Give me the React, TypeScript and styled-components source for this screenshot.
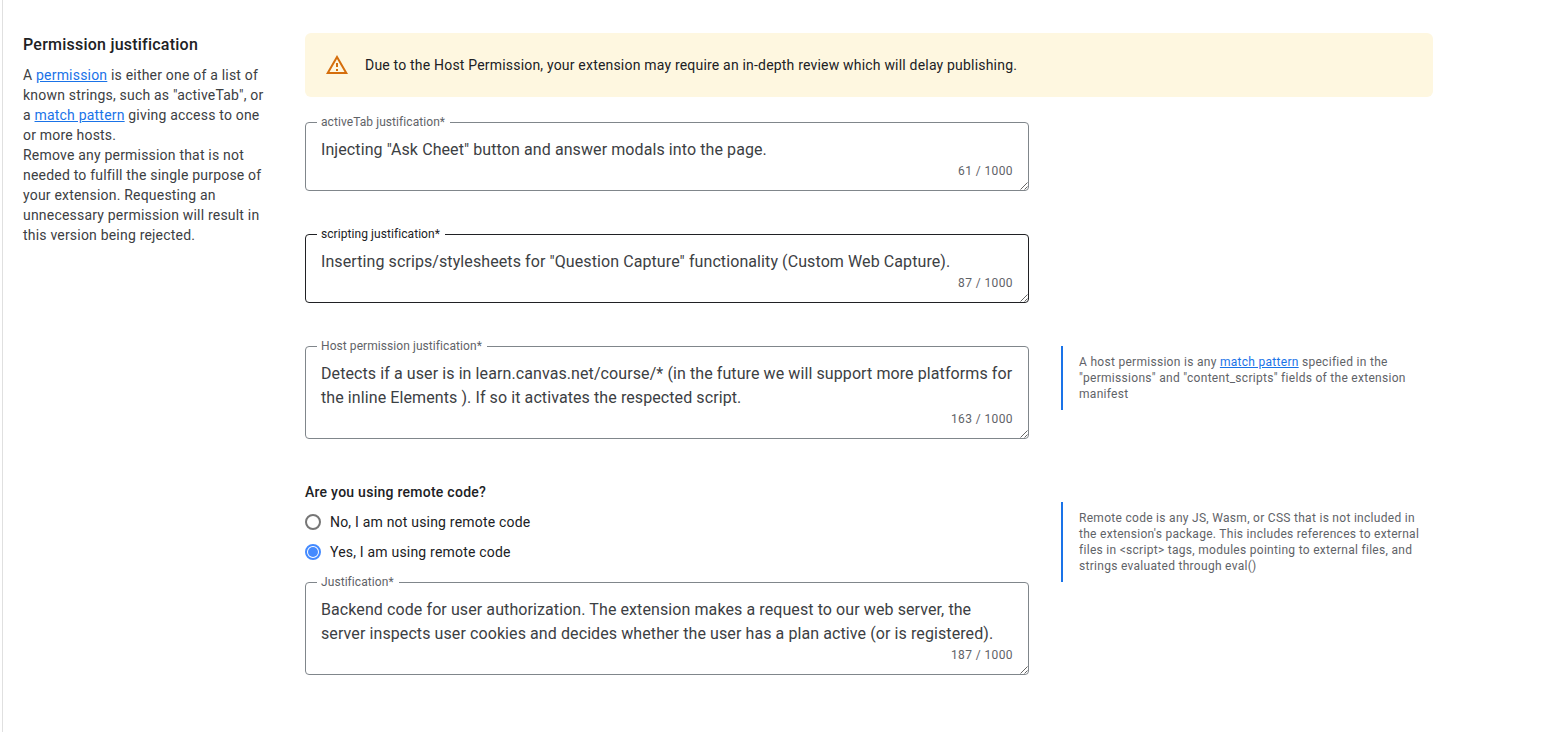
import React from 'react';
import styled, { createGlobalStyle } from 'styled-components';

const GlobalStyle = createGlobalStyle`
  * { box-sizing: border-box; }
  body {
    margin: 0;
    background: #fff;
    font-family: Roboto, "Liberation Sans", sans-serif;
  }
`;

const Page = styled.div`
  display: flex;
  align-items: flex-start;
  width: 1553px;
  height: 732px;
  margin-left: 2px;
  padding: 33px 0 0 20px;
  border-left: 1px solid #e0e0e0;
  overflow: hidden;
`;

const Sidebar = styled.aside`
  flex: none;
  width: 282px;
  padding-right: 36px;
`;

const SidebarTitle = styled.h2`
  margin: 0 0 8px;
  font-size: 16px;
  font-weight: 500;
  line-height: 24px;
  letter-spacing: 0.23px;
  color: #202124;
`;

const SidebarText = styled.p`
  margin: 0;
  font-size: 14px;
  line-height: 20px;
  letter-spacing: 0.2px;
  color: #3c4043;
`;

const Link = styled.a`
  color: #1a73e8;
  text-decoration: underline;
`;

const Main = styled.main`
  flex: none;
  width: 1128px;
`;

const Alert = styled.div`
  display: flex;
  align-items: center;
  gap: 16px;
  height: 64px;
  margin-bottom: 17px;
  padding-left: 20px;
  border-radius: 6px;
  background: #fef7e0;
  font-size: 14px;
  line-height: 20px;
  letter-spacing: 0.194px;
  color: #202124;
`;

const Row = styled.div<{ $gap?: number }>`
  display: flex;
  align-items: flex-start;
  gap: 32px;
  margin-bottom: ${p => p.$gap ?? 35}px;
`;

const FieldBox = styled.fieldset<{ $active?: boolean; $lines: number }>`
  position: relative;
  flex: none;
  width: 724px;
  height: ${p => 53 + p.$lines * 24}px;
  min-width: 0;
  margin: 0;
  padding: 7px 15px 0;
  border: 1px solid ${p => (p.$active ? '#202124' : '#80868b')};
  border-radius: 4px;
`;

const FieldLabel = styled.legend<{ $active?: boolean }>`
  height: 17px;
  margin-left: -4px;
  padding: 0 5px 0 4px;
  font-size: 12px;
  line-height: 16px;
  letter-spacing: 0.07px;
  color: ${p => (p.$active ? '#202124' : '#5f6368')};
`;

const FieldValue = styled.div`
  font-size: 16px;
  line-height: 24px;
  letter-spacing: 0.092px;
  color: #3c4043;
  white-space: pre;
`;

const Counter = styled.div`
  font-size: 12px;
  line-height: 18px;
  letter-spacing: 0.4px;
  text-align: right;
  color: #5f6368;
`;

const Grip = styled.svg`
  position: absolute;
  right: 0;
  bottom: 0;
`;

const Note = styled.aside<{ $top: number }>`
  width: 372px;
  margin-top: ${p => p.$top}px;
  padding: 8px 0 8px 16px;
  border-left: 2px solid #1a73e8;
  font-size: 12px;
  line-height: 16px;
  letter-spacing: 0.29px;
  color: #5f6368;
`;

const RemoteCode = styled.section`
  flex: none;
  width: 724px;
`;

const Question = styled.h3`
  margin: 0 0 10px;
  font-size: 14px;
  font-weight: 500;
  line-height: 20px;
  letter-spacing: 0.26px;
  color: #202124;
`;

const OptionList = styled.div`
  display: flex;
  flex-direction: column;
  gap: 10px;
  margin-bottom: 12px;
`;

const Option = styled.label`
  display: flex;
  align-items: center;
  gap: 9px;
  height: 20px;
  font-size: 14px;
  line-height: 20px;
  letter-spacing: 0.2px;
  color: #202124;
`;

function Warning() {
  return (
    <svg width="24" height="24" viewBox="0 0 24 24" fill="#d56e0c">
      <path d="M12 5.99 19.53 19H4.47L12 5.99M12 2 1 21h22L12 2zm1 14h-2v2h2v-2zm0-6h-2v4h2v-4z" />
    </svg>
  );
}

function Radio({ checked }: { checked?: boolean }) {
  return (
    <svg width="16" height="16" viewBox="0 0 16 16">
      <circle cx="8" cy="8" r="7" fill="#fff" stroke={checked ? '#448aff' : '#767676'} strokeWidth="2" />
      {checked && <circle cx="8" cy="8" r="5" fill="#448aff" />}
    </svg>
  );
}

interface FieldProps {
  label: string;
  value: string;
  count: number;
  active?: boolean;
}

function Field({ label, value, count, active }: FieldProps) {
  return (
    <FieldBox $active={active} $lines={value.split('\n').length}>
      <FieldLabel $active={active}>{label}*</FieldLabel>
      <FieldValue>{value}</FieldValue>
      <Counter>{count} / 1000</Counter>
      <Grip width="8" height="8" viewBox="0 0 8 8" stroke="#555" strokeWidth="0.9">
        <path d="M0.5 7.5 7.5 0.5M4.5 7.5 7.5 4.5" />
      </Grip>
    </FieldBox>
  );
}

export default function App() {
  return (
    <Page>
      <GlobalStyle />
      <Sidebar>
        <SidebarTitle>Permission justification</SidebarTitle>
        <SidebarText>
          A <Link>permission</Link> is either one of a list of known strings, such as "activeTab", or a{' '}
          <Link>match pattern</Link> giving access to one or more hosts.
        </SidebarText>
        <SidebarText>
          Remove any permission that is not needed to fulfill the single purpose of your extension. Requesting an
          unnecessary permission will result in this version being rejected.
        </SidebarText>
      </Sidebar>
      <Main>
        <Alert>
          <Warning />
          <span>Due to the Host Permission, your extension may require an in-depth review which will delay publishing.</span>
        </Alert>
        <Row>
          <Field
            label="activeTab justification"
            value={'Injecting "Ask Cheet" button and answer modals into the page.'}
            count={61}
          />
        </Row>
        <Row>
          <Field
            active
            label="scripting justification"
            value={'Inserting scrips/stylesheets for "Question Capture" functionality (Custom Web Capture).'}
            count={87}
          />
        </Row>
        <Row $gap={43}>
          <Field
            label="Host permission justification"
            value={
              'Detects if a user is in learn.canvas.net/course/* (in the future we will support more platforms for\nthe inline Elements ). If so it activates the respected script.'
            }
            count={163}
          />
          <Note $top={8}>
            A host permission is any <Link>match pattern</Link> specified in the "permissions" and "content_scripts"
            fields of the extension manifest
          </Note>
        </Row>
        <Row>
          <RemoteCode>
            <Question>Are you using remote code?</Question>
            <OptionList>
              <Option><Radio />No, I am not using remote code</Option>
              <Option><Radio checked />Yes, I am using remote code</Option>
            </OptionList>
            <Field
              label="Justification"
              value={
                'Backend code for user authorization. The extension makes a request to our web server, the\nserver inspects user cookies and decides whether the user has a plan active (or is registered).'
              }
              count={187}
            />
          </RemoteCode>
          <Note $top={20}>
            Remote code is any JS, Wasm, or CSS that is not included in the extension's package. This includes
            references to external files in &lt;script&gt; tags, modules pointing to external files, and strings
            evaluated through eval()
          </Note>
        </Row>
      </Main>
    </Page>
  );
}
